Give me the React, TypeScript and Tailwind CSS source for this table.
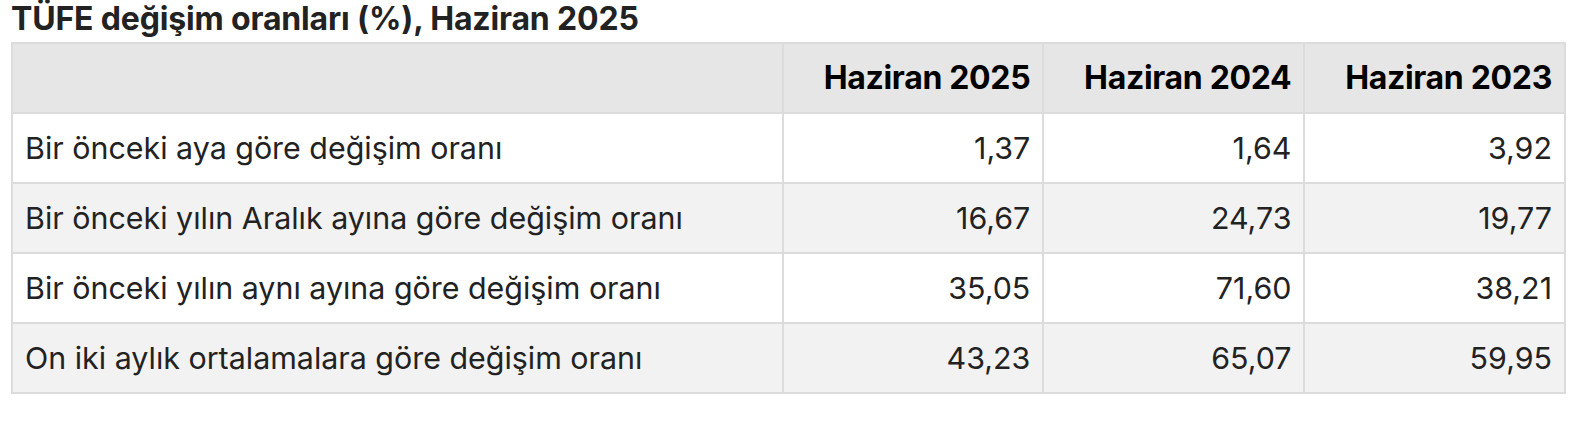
const rows: [string, string, string, string][] = [
  ['Bir önceki aya göre değişim oranı', '1,37', '1,64', '3,92'],
  ['Bir önceki yılın Aralık ayına göre değişim oranı', '16,67', '24,73', '19,77'],
  ['Bir önceki yılın aynı ayına göre değişim oranı', '35,05', '71,60', '38,21'],
  ['On iki aylık ortalamalara göre değişim oranı', '43,23', '65,07', '59,95'],
]

const years = ['Haziran 2025', 'Haziran 2024', 'Haziran 2023']

export default function App() {
  return (
    <div className="min-h-[440px] bg-white pl-[11px] pr-[22px] font-['Inter',sans-serif] text-[#222]">
      <h2 className="h-[42px] text-[32px] font-bold leading-[38px] tracking-[-0.005em]">
        TÜFE değişim oranları (%), Haziran 2025
      </h2>
      <table className="w-full border-collapse text-[30.4px]">
        <thead>
          <tr className="bg-[#e6e6e6]">
            <th className="w-[771px] border-2 border-[#dcdcdc] px-3 py-3 leading-[44px]" />
            {years.map((year) => (
              <th
                key={year}
                className="border-2 border-[#dcdcdc] px-3 py-3 text-right text-[32px] font-bold leading-[44px] tracking-[-0.01em] text-black"
              >
                {year}
              </th>
            ))}
          </tr>
        </thead>
        <tbody>
          {rows.map((row, rowIndex) => (
            <tr key={row[0]} className={rowIndex % 2 === 1 ? 'bg-[#f2f2f2]' : 'bg-white'}>
              <td className="border-2 border-[#dcdcdc] px-3 py-3 text-left leading-[44px]">{row[0]}</td>
              {row.slice(1).map((value, valueIndex) => (
                <td
                  key={valueIndex}
                  className="border-2 border-[#dcdcdc] px-3 py-3 text-right leading-[44px]"
                >
                  {value}
                </td>
              ))}
            </tr>
          ))}
        </tbody>
      </table>
    </div>
  )
}
